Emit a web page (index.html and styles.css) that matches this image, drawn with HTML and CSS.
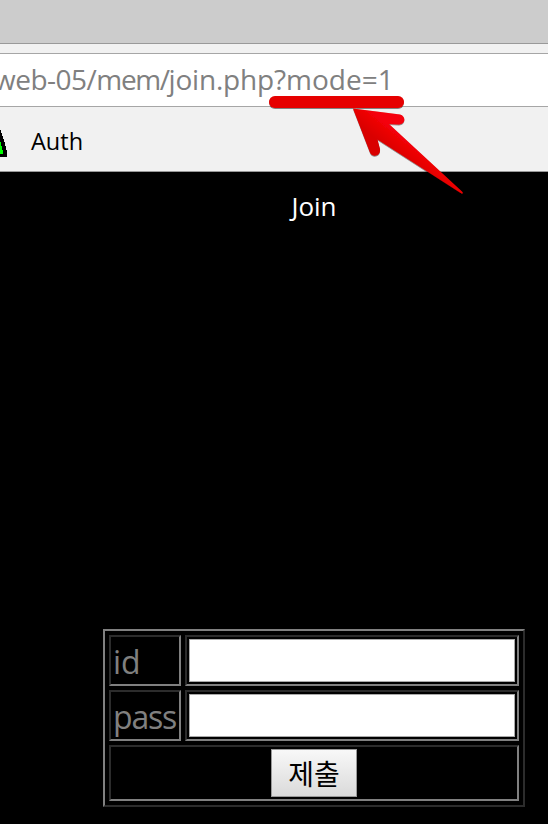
FILE: index.html
```html
<!DOCTYPE html>
<html lang="ko">
<head>
<meta charset="utf-8">
<title>Join</title>
<link rel="stylesheet" href="styles.css">
</head>
<body>
<div class="tabs"></div>
<div class="toolbar"><div class="address"><span class="url"><span class="host">web-05/</span><span class="dir">mem/</span><span class="file">join.php</span>?mode=1</span></div></div>
<div class="bookmarks">
  <svg class="favicon" width="7" height="27" viewBox="0 0 7 27" shape-rendering="crispEdges"><path d="M0 0h1v3h1v3h1v3h1v3h1v4h1v4h1v7H0z" fill="#000"/><path d="M0 12h1v4h1v4h1v4H0z" fill="#0f0"/></svg>
  <span class="bookmark">Auth</span>
</div>
<main class="page">
  <h1 class="title"><span>Join</span></h1>
  <form class="form">
    <div class="cell"><label for="id" class="id">id</label></div>
    <div class="cell"><input id="id" type="text"></div>
    <div class="cell"><label for="pass" class="pass">pass</label></div>
    <div class="cell"><input id="pass" type="text"></div>
    <div class="cell submit"><button type="button">제출</button></div>
  </form>
</main>
<svg class="annotation" width="204" height="110" viewBox="264 90 204 110">
  <defs>
    <linearGradient id="red" gradientUnits="userSpaceOnUse" x1="392" y1="152" x2="404" y2="137"><stop offset="0" stop-color="#d90000"/><stop offset="1" stop-color="#f50408"/></linearGradient>
    <filter id="shade" x="-10%" y="-20%" width="120%" height="140%"><feDropShadow dx="0" dy="0.7" stdDeviation="0.6" flood-color="#000" flood-opacity=".65"/></filter>
  </defs>
  <g filter="url(#shade)">
    <rect x="269" y="96" width="135" height="12" rx="6" fill="#e60004"/>
    <path d="M353 108.500L400 114.500C406 116 406 124 399 124.500L389 124L462 191.500Q464 193.500 461.500 193.500L377.500 139.500L380 149C381 156 372.500 158 370 152.500Z" fill="url(#red)"/>
  </g>
</svg>
</body>
</html>
```
FILE: styles.css
```css
* { box-sizing: border-box; }
body {
  margin: 0;
  width: 548px;
  height: 824px;
  overflow: hidden;
  position: relative;
  background: #000;
  font-family: "Open Sans", "Noto Sans CJK KR", sans-serif;
}
.tabs { height: 44px; background: #ccc; border-bottom: 1px solid #999; }
.toolbar { padding-top: 9px; background: #f1f1f1; }
.address {
  height: 54px;
  background: #fff;
  border: solid #a6a6a6;
  border-width: 1px 0;
  overflow: hidden;
}
.url {
  display: block;
  margin-left: -6px;
  font-size: 28px;
  line-height: 50px;
  color: #808080;
  white-space: nowrap;
}
.host { letter-spacing: -0.5px; }
.dir { letter-spacing: -1.4px; }
.file { letter-spacing: -0.2px; }
.bookmarks {
  display: flex;
  align-items: flex-start;
  height: 65px;
  padding-top: 22px;
  background: #f1f1f1;
  border-bottom: 1px solid #999;
}
.favicon { display: block; margin-top: 1px; }
.bookmark { margin-left: 24px; font-size: 23.5px; line-height: 24px; color: #000; }
.page { display: flex; flex-direction: column; align-items: center; padding-left: 80px; }
.title {
  margin: 14px 0 0;
  height: 41px;
  font-size: 26px;
  font-weight: 400;
  line-height: 40px;
  color: #fff;
}
.form {
  display: grid;
  grid-template-columns: 72px 334px;
  grid-template-rows: 51px 51px 56px;
  gap: 4px;
  width: 422px;
  margin: 402px 0 0;
  padding: 4px;
  border: 2px solid;
  border-color: #808080 #2c2c2c #2c2c2c #808080;
}
.cell {
  padding: 2px;
  border: 2px solid;
  border-color: #2c2c2c #808080 #808080 #2c2c2c;
}
.cell label { display: block; color: #808080; font-size: 32px; line-height: 45px; white-space: nowrap; }
.cell .pass { letter-spacing: -1.2px; }
.cell input {
  display: block;
  width: 326px;
  height: 43px;
  padding: 0 4px;
  border: 1px solid #a9a9a9;
  background: #fff;
  font-size: 28px;
}
.submit { grid-column: 1 / 3; display: flex; justify-content: center; }
.submit button {
  width: 86px;
  height: 48px;
  padding: 0;
  border: 1px solid #999;
  background: linear-gradient(#f8f8f8, #dadada);
  color: #000;
  font: 28px/46px "Noto Sans CJK KR", sans-serif;
}
.annotation { position: absolute; left: 264px; top: 90px; }
```
